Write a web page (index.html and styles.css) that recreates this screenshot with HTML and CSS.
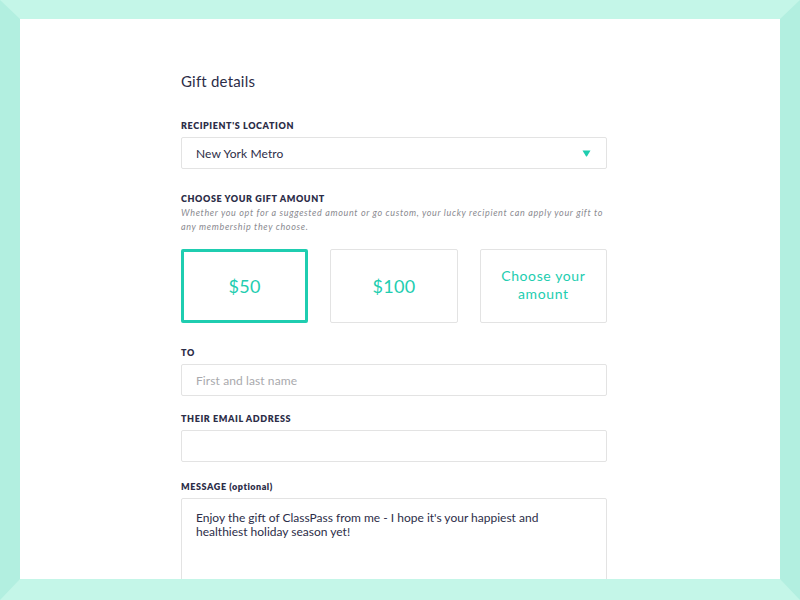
FILE: index.html
```html
<!DOCTYPE html>
<html lang="en">
<head>
<meta charset="utf-8">
<title>Gift details</title>
<link rel="stylesheet" href="styles.css">
</head>
<body>
<main class="sheet">
  <form class="form">
    <h1 class="title">Gift details</h1>

    <section class="group group-location">
      <div class="label">RECIPIENT'S LOCATION</div>
      <div class="select">
        <span class="select-value">New York Metro</span>
        <svg class="caret" width="9" height="7" viewBox="0 0 9 7"><path d="M0.5 0.5 H8.5 L5.2 6 Q4.5 7 3.8 6 Z" fill="#1fcdaf"/></svg>
      </div>
    </section>

    <section class="group group-amount">
      <div class="label">CHOOSE YOUR GIFT AMOUNT</div>
      <p class="hint">Whether you opt for a suggested amount or go custom, your lucky recipient can apply your gift to any membership they choose.</p>
      <div class="amounts">
        <div class="amount selected">$50</div>
        <div class="amount">$100</div>
        <div class="amount custom">Choose your<br>amount</div>
      </div>
    </section>

    <section class="group group-to">
      <div class="label">TO</div>
      <div class="input placeholder">First and last name</div>
    </section>

    <section class="group group-email">
      <div class="label">THEIR EMAIL ADDRESS</div>
      <div class="input"></div>
    </section>

    <section class="group group-message">
      <div class="label">MESSAGE <span class="optional">(optional)</span></div>
      <div class="textarea">Enjoy the gift of ClassPass from me - I hope it's your happiest and healthiest holiday season yet!</div>
    </section>
  </form>
</main>
</body>
</html>
```

FILE: styles.css
```css
* { box-sizing: border-box; }

html, body {
  margin: 0;
  padding: 0;
}

body {
  width: 800px;
  height: 600px;
  overflow: hidden;
  border-style: solid;
  border-width: 19px 20px 21px 20px;
  border-top-color: #c4f6e8;
  border-bottom-color: #c4f6e8;
  border-left-color: #b2efe0;
  border-right-color: #b2efe0;
  background: #ffffff;
  font-family: "Lato", "Liberation Sans", sans-serif;
  color: #2c2d48;
}

.sheet {
  height: 560px;
  overflow: hidden;
  padding: 52px 0 0 161px;
}

.form {
  width: 426px;
}

.title {
  margin: 0;
  font-size: 15px;
  line-height: 20px;
  font-weight: 400;
  letter-spacing: 0.2px;
  color: #2c2d48;
}

.label {
  font-size: 9px;
  line-height: 12px;
  font-weight: 800;
  letter-spacing: 0.6px;
  color: #2c2d48;
  margin-bottom: 5px;
}

.optional {
  letter-spacing: 0.5px;
}

.group-location { margin-top: 29px; }
.group-amount { margin-top: 24px; }
.group-to { margin-top: 24px; }
.group-email { margin-top: 17px; }
.group-message { margin-top: 19px; }

.select,
.input {
  height: 32px;
  border: 1px solid #e3e3e3;
  border-radius: 2px;
  display: flex;
  align-items: center;
  justify-content: space-between;
  padding: 0 15px 0 14px;
  font-size: 12px;
  letter-spacing: 0.1px;
  color: #2c2d48;
}

.caret {
  display: block;
  margin-top: 1px;
}

.placeholder {
  color: #a9a9ad;
}

.group-amount .label {
  margin-bottom: 1px;
}

.hint {
  margin: 0;
  font-size: 9px;
  line-height: 14px;
  font-style: italic;
  color: #8a8a90;
  letter-spacing: 0.65px;
}

.amounts {
  margin-top: 15px;
  display: grid;
  grid-template-columns: repeat(3, 1fr);
  gap: 22px;
}

.amount {
  height: 74px;
  border: 1px solid #e3e3e3;
  border-radius: 2px;
  display: flex;
  align-items: center;
  justify-content: center;
  text-align: center;
  font-size: 18px;
  color: #22cdb0;
  letter-spacing: 0.3px;
}

.amount.selected {
  border: 3px solid #1fcdb0;
}

.amount.custom {
  font-size: 14px;
  line-height: 18px;
  letter-spacing: 0.6px;
  padding-bottom: 2px;
}

.textarea {
  height: 120px;
  border: 1px solid #e3e3e3;
  border-radius: 2px;
  padding: 12px 14px;
  font-size: 12px;
  line-height: 14px;
  letter-spacing: 0;
  color: #2c2d48;
}
```
